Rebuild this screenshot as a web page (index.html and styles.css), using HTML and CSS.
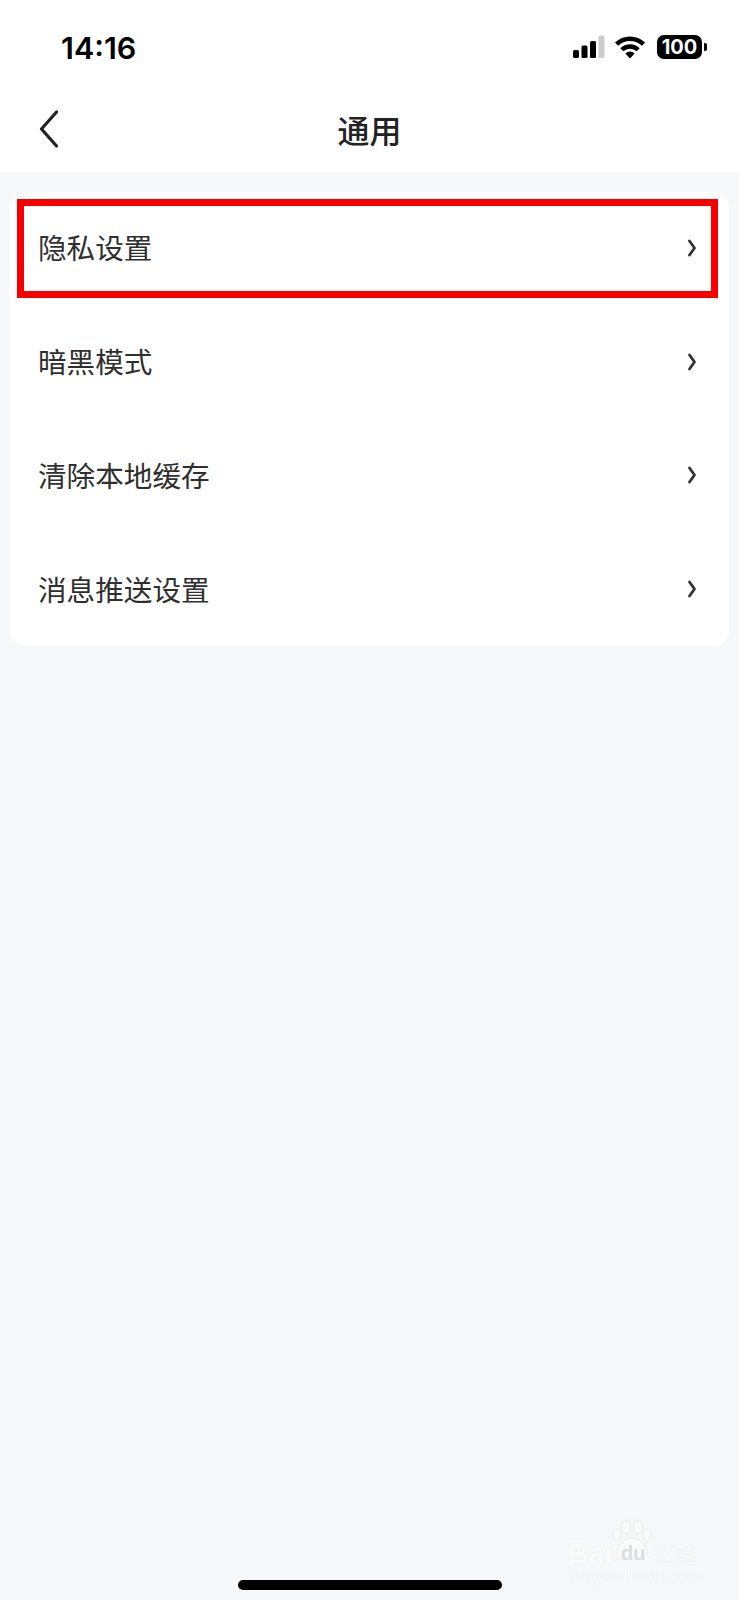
FILE: index.html
```html
<!DOCTYPE html>
<html lang="zh">
<head>
<meta charset="utf-8">
<title>通用</title>
<link rel="stylesheet" href="styles.css">
</head>
<body>
<div class="page">
  <header class="top">
    <div class="status">
      <span class="time">14:16</span>
      <div class="status-icons">
        <svg class="signal" width="32" height="24" viewBox="0 0 32 24"><rect x="0" y="15" width="6" height="8" rx="1.500" fill="#000"/><rect x="8.500" y="10.500" width="6" height="12.500" rx="1.500" fill="#000"/><rect x="17" y="6" width="6" height="17" rx="1.500" fill="#000"/><rect x="25.500" y="0.500" width="6" height="22.500" rx="1.500" fill="#ccc"/></svg>
        <svg class="wifi" width="32" height="24" viewBox="0 0 32 24"><path d="M1 7.500a21.500 21.500 0 0 1 30 0l-3 3.200a17.500 17.500 0 0 0-24 0z" fill="#000"/><path d="M6.300 13.200a14 14 0 0 1 19.400 0l-3 3.100a10 10 0 0 0-13.400 0z" fill="#000"/><path d="M11.400 18.500a6.500 6.500 0 0 1 9.200 0L16 23.500z" fill="#000"/></svg>
        <div class="battery"><span class="battery-level">100</span><span class="battery-cap"></span></div>
      </div>
    </div>
    <div class="nav">
      <svg class="back" width="20" height="38" viewBox="0 0 20 38"><path d="M17.500 2 2.500 19l15 17" fill="none" stroke="#222" stroke-width="3.200" stroke-linecap="round" stroke-linejoin="round"/></svg>
      <h1 class="title">通用</h1>
    </div>
  </header>
  <main class="card">
    <div class="row"><span>隐私设置</span><svg class="chev" width="10" height="18" viewBox="0 0 10 18"><path d="M2.500 2 7.500 9l-5 7" fill="none" stroke="#333" stroke-width="2.800" stroke-linecap="round" stroke-linejoin="round"/></svg><div class="mark"></div></div>
    <div class="row"><span>暗黑模式</span><svg class="chev" width="10" height="18" viewBox="0 0 10 18"><path d="M2.500 2 7.500 9l-5 7" fill="none" stroke="#333" stroke-width="2.800" stroke-linecap="round" stroke-linejoin="round"/></svg></div>
    <div class="row"><span>清除本地缓存</span><svg class="chev" width="10" height="18" viewBox="0 0 10 18"><path d="M2.500 2 7.500 9l-5 7" fill="none" stroke="#333" stroke-width="2.800" stroke-linecap="round" stroke-linejoin="round"/></svg></div>
    <div class="row"><span>消息推送设置</span><svg class="chev" width="10" height="18" viewBox="0 0 10 18"><path d="M2.500 2 7.500 9l-5 7" fill="none" stroke="#333" stroke-width="2.800" stroke-linecap="round" stroke-linejoin="round"/></svg></div>
  </main>
  <div class="home"></div>
  <div class="watermark">
    <svg class="wm-paw" width="40" height="44" viewBox="0 0 40 44"><g fill="#fbfbfc" stroke="#e9eaee" stroke-width="1"><ellipse cx="5" cy="16" rx="4" ry="6"/><ellipse cx="14" cy="8" rx="4.500" ry="7"/><ellipse cx="26" cy="8" rx="4.500" ry="7"/><ellipse cx="35" cy="16" rx="4" ry="6"/><path d="M20 19c6 0 8 3 12 7 6 5 3 15-5 14-3 0-4-1-7-1s-4 1-7 1c-8 1-11-9-5-14 4-4 6-7 12-7z"/></g></svg>
    <span class="wm-bai">Bai</span>
    <span class="wm-du">du</span>
    <span class="wm-cn">经验</span>
    <div class="wm-url">jingyan.baidu.com</div>
  </div>
</div>
</body>
</html>
```
FILE: styles.css
```css
* { box-sizing: border-box; }
html, body { margin: 0; padding: 0; }
body {
  font-family: "Noto Sans CJK SC", "Inter", sans-serif;
  background: #f7f8fa;
}
.page {
  position: relative;
  width: 739px;
  height: 1600px;
  display: flex;
  flex-direction: column;
  overflow: hidden;
  background: #f7f8fa;
}
.top { background: #fff; height: 172px; flex: none; }
.status {
  height: 90px;
  display: flex;
  align-items: center;
  justify-content: space-between;
  padding: 4px 32px 0 61px;
}
.time {
  font-family: "Inter", sans-serif;
  font-weight: 600;
  font-size: 30.500px;
  color: #000;
}
.status-icons { display: flex; align-items: center; gap: 9px; }
.wifi { margin-right: 2px; }
.battery { display: flex; align-items: center; gap: 2px; }
.battery-level {
  width: 45px;
  height: 24px;
  border-radius: 7px;
  background: #000;
  color: #fff;
  font-family: "Inter", sans-serif;
  font-weight: 700;
  font-size: 20px;
  line-height: 24px;
  text-align: center;
}
.battery-cap {
  width: 3px;
  height: 8px;
  background: #000;
  border-radius: 0 2px 2px 0;
}
.nav {
  position: relative;
  height: 82px;
  display: flex;
  align-items: center;
  justify-content: center;
}
.back { position: absolute; left: 39px; top: 20px; }
.title {
  margin: 0;
  font-size: 32px;
  font-weight: 500;
  color: #222;
  line-height: 44px;
  position: relative;
  top: -2px;
}
.card {
  margin: 20px 10px 0;
  background: #fff;
  border-radius: 16px;
  flex: none;
  padding-top: 1px;
  height: 454px;
}
.row {
  position: relative;
  height: 113.800px;
  display: flex;
  align-items: center;
  justify-content: space-between;
  padding: 0 32px 0 28px;
  font-size: 28.600px;
  font-weight: 400;
  color: #2f2f2f;
}
.row span { position: relative; top: -3px; }
.chev { flex: none; position: relative; top: -2px; }
.mark {
  position: absolute;
  left: 7px;
  top: 6px;
  width: 701px;
  height: 98.500px;
  border: 7.500px solid #f80000;
}
.home {
  margin: auto auto 0;
  position: relative;
  top: -10px;
  width: 264px;
  height: 10px;
  background: #000;
  border-radius: 5px;
}
.watermark {
  position: absolute;
  left: 566px;
  top: 1519px;
  width: 134px;
  height: 66px;
  color: #fcfcfd;
}
.wm-paw { position: absolute; left: 46px; top: 0; }
.wm-bai {
  position: absolute;
  left: 2px;
  top: 24px;
  font-family: "Liberation Sans", sans-serif;
  font-size: 28px;
  font-weight: 700;
  letter-spacing: 0.500px;
  line-height: 22px;
  text-shadow: 0 0 1px #dfe0e4;
}
.wm-du {
  position: absolute;
  left: 55px;
  top: 24px;
  font-family: "Liberation Sans", sans-serif;
  font-size: 20px;
  font-weight: 700;
  line-height: 20px;
  color: #dcdde1;
}
.wm-cn {
  position: absolute;
  left: 87px;
  top: 23px;
  font-size: 22px;
  line-height: 22px;
  white-space: nowrap;
  text-shadow: 0 0 1px #dfe0e4;
}
.wm-url {
  position: absolute;
  left: 2px;
  top: 48px;
  font-family: "Liberation Serif", serif;
  font-size: 18px;
  line-height: 18px;
  white-space: nowrap;
  text-shadow: 0 0 1px #dfe0e4;
}
```
